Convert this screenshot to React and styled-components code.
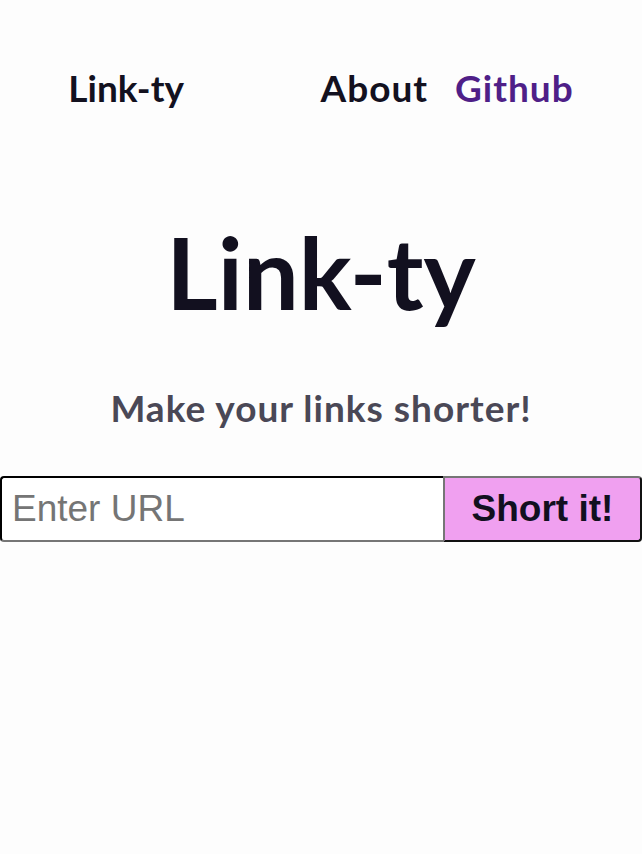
import React from "react";
import styled, { createGlobalStyle } from "styled-components";

const Global = createGlobalStyle`
  html, body { margin: 0; padding: 0; background: #fdfdfd; }
  body { font-family: "Lato", "Noto Sans", sans-serif; }
`;

const Page = styled.div`
  width: 642px;
  min-height: 854px;
  display: flex;
  flex-direction: column;
`;

const Nav = styled.nav`
  display: flex;
  justify-content: space-around;
  align-items: center;
  padding-top: 62px;
  height: 50px;
`;

const NavBrand = styled.div`
  font-size: 37px;
  font-weight: 700;
  letter-spacing: 0;
  color: #13111f;
`;

const NavLinks = styled.div`
  display: flex;
  gap: 27px;
`;

const NavLink = styled.a`
  font-size: 37px;
  font-weight: 700;
  letter-spacing: 1px;
  text-decoration: none;
  color: ${(p) => (p.$accent ? "#4f1f88" : "#13111f")};
`;

const Hero = styled.section`
  display: flex;
  flex-direction: column;
  align-items: center;
  padding-top: 100px;
`;

const Title = styled.h1`
  margin: 0;
  font-size: 99px;
  line-height: 120px;
  font-weight: 700;
  color: #12101f;
`;

const Subtitle = styled.p`
  margin: 53px 0 0;
  font-size: 37px;
  font-weight: 700;
  letter-spacing: 1px;
  color: #4a4856;
`;

const Form = styled.form`
  display: flex;
  margin-top: 46px;
  height: 66px;
`;

const UrlInput = styled.input`
  flex: 1;
  min-width: 0;
  box-sizing: border-box;
  height: 66px;
  padding: 0 10px;
  border: 2px inset #767676;
  border-top-color: #1a1a1a;
  border-left-color: #1a1a1a;
  border-right: none;
  border-radius: 4px 0 0 4px;
  background: #ffffff;
  font-family: "Liberation Sans", Arial, sans-serif;
  font-size: 37px;
  color: #222;
  &::placeholder { color: #757575; }
  outline: none;
`;

const SubmitButton = styled.button`
  width: 199px;
  box-sizing: border-box;
  height: 66px;
  border: 2px solid #111;
  border-top-color: #767676;
  border-left-color: #767676;
  border-radius: 0 4px 4px 0;
  background: #f0a0f0;
  font-family: "Liberation Sans", Arial, sans-serif;
  font-weight: 700;
  font-size: 37px;
  color: #12101f;
  padding: 0;
  cursor: pointer;
`;

export default function App() {
  return (
    <Page>
      <Global />
      <Nav>
        <NavBrand>Link-ty</NavBrand>
        <NavLinks>
          <NavLink href="#">About</NavLink>
          <NavLink href="#" $accent>Github</NavLink>
        </NavLinks>
      </Nav>
      <Hero>
        <Title>Link-ty</Title>
        <Subtitle>Make your links shorter!</Subtitle>
      </Hero>
      <Form onSubmit={(e) => e.preventDefault()}>
        <UrlInput placeholder="Enter URL" />
        <SubmitButton type="submit">Short it!</SubmitButton>
      </Form>
    </Page>
  );
}
